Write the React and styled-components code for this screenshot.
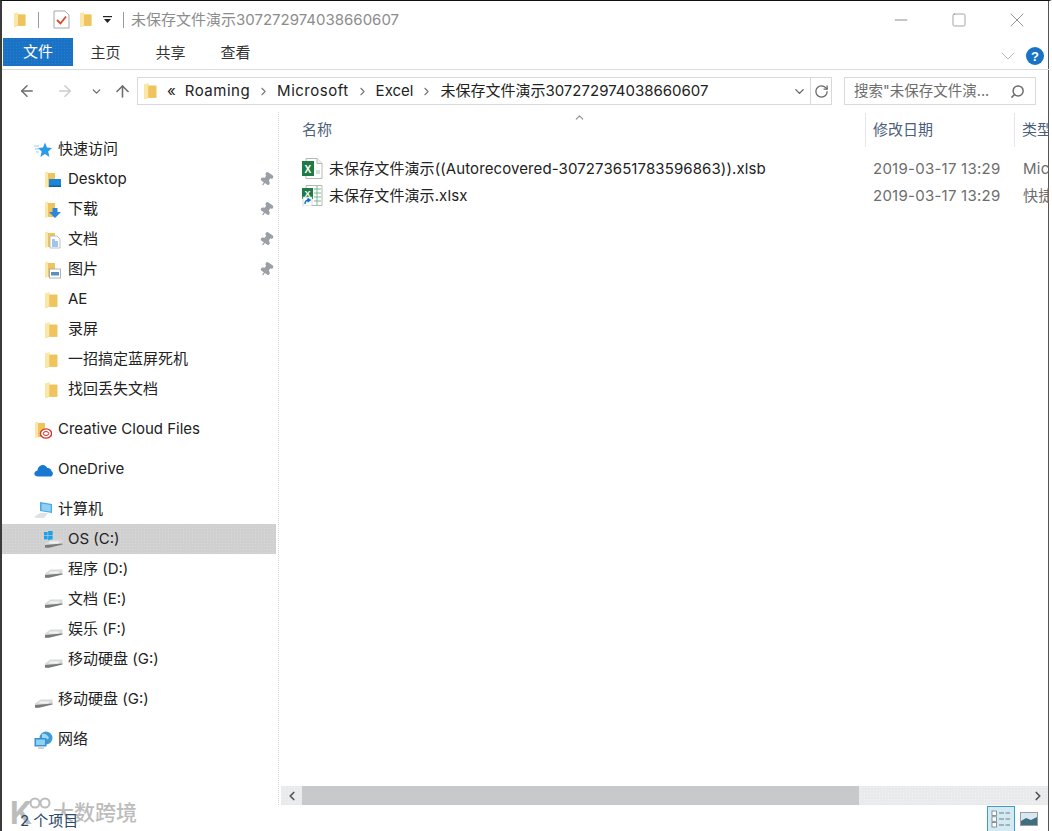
import React from 'react'
import styled, { createGlobalStyle } from 'styled-components'
import { ArrowLeft, ArrowRight, ArrowUp, ChevronDown, ChevronUp, ChevronLeft, ChevronRight, RotateCw, Search, X, Minus, Square, Pin } from 'lucide-react'

const FONT = 'Inter, "Noto Sans CJK SC", sans-serif'

const GlobalStyle = createGlobalStyle`
  html, body { margin: 0; padding: 0; background: #fff; }
  * { box-sizing: border-box; }
`

const Win = styled.div`
  position: relative;
  width: 1052px;
  height: 831px;
  display: flex;
  flex-direction: column;
  background: #fff;
  border-top: 1px solid #111;
  border-left: 2px solid #3a3a3a;
  border-right: 3px solid #fff;
  box-shadow: inset -1px 0 0 #555;
  font-family: ${FONT};
  font-size: 15px;
  line-height: 20px;
  overflow: hidden;
`

const TitleBar = styled.div`
  height: 37px;
  display: flex;
  align-items: center;
  padding-left: 11px;
  flex-shrink: 0;
`

const QuickIcon = styled.span`
  display: flex;
  align-items: center;
  margin-right: ${({ $gap }) => $gap || 0}px;
`

const Sep = styled.span`
  width: 1px;
  height: 16px;
  background: #9a9a9a;
  margin-right: ${({ $gap }) => $gap || 0}px;
`

const TitleText = styled.span`
  color: #8c8c8c;
  flex: 1;
`

const WinButtons = styled.div`
  display: flex;
  align-items: center;
  color: #777;
  padding-right: 3px;
`

const WinButton = styled.span`
  width: 58px;
  display: flex;
  justify-content: center;
`

const Ribbon = styled.div`
  height: 32px;
  display: flex;
  align-items: flex-start;
  border-bottom: 1px solid #dadbdc;
  flex-shrink: 0;
  padding-left: 1px;
`

const FileTab = styled.div`
  width: 70px;
  height: 28px;
  background-color: #1a72c4;
  background-image: radial-gradient(#2a80cf 0.6px, transparent 0.7px);
  background-size: 3px 3px;
  color: #fff;
  display: flex;
  align-items: center;
  justify-content: center;
`

const RibbonTab = styled.div`
  width: 65px;
  height: 30px;
  color: #333;
  display: flex;
  align-items: center;
  justify-content: center;
`

const RibbonEnd = styled.div`
  margin-left: auto;
  display: flex;
  align-items: center;
  gap: 6px;
  padding: 6px 5px 0 0;
  color: #a9a9a9;
`

const Help = styled.span`
  width: 18px;
  height: 18px;
  border-radius: 50%;
  background: #1a72c4;
  color: #fff;
  font: 700 13px "Liberation Sans", sans-serif;
  display: flex;
  align-items: center;
  justify-content: center;
`

const NavBar = styled.div`
  height: 42px;
  display: flex;
  align-items: center;
  padding: 0 12px 0 16px;
  flex-shrink: 0;
`

const NavButton = styled.span`
  display: flex;
  width: ${({ $w }) => $w}px;
  color: ${({ $off }) => ($off ? '#ccc' : '#6d6d6d')};
`

const AddressBox = styled.div`
  width: 695px;
  height: 28px;
  border: 1px solid #d9d9d9;
  display: flex;
  align-items: center;
  padding-left: 5px;
  color: #222;
  margin-left: 1px;
`

const Crumb = styled.span`
  margin-left: ${({ $left }) => $left || 0}px;
  letter-spacing: ${({ $wide }) => ($wide ? '0.5px' : '0')};
  white-space: nowrap;
`

const CrumbArrow = styled.span`
  display: flex;
  color: #777;
  margin: 0 7px;
`

const AddressEnd = styled.span`
  margin-left: auto;
  display: flex;
  align-items: center;
  height: 100%;
  color: #666;
`

const RefreshCell = styled.span`
  width: 21px;
  height: 100%;
  border-left: 1px solid #d9d9d9;
  margin-left: 3px;
  display: flex;
  align-items: center;
  justify-content: center;
`

const SearchBox = styled.div`
  width: 192px;
  height: 28px;
  margin-left: 12px;
  border: 1px solid #d9d9d9;
  display: flex;
  align-items: center;
  justify-content: space-between;
  padding: 0 10px 0 9px;
  font-size: 14.5px;
  color: #6d6d6d;
  white-space: nowrap;
`

const Body = styled.div`
  flex: 1;
  display: flex;
  min-height: 0;
`

const Sidebar = styled.nav`
  width: 277px;
  flex-shrink: 0;
  padding-top: 22px;
  border-right: 1px dotted #d6d6d6;
  margin-bottom: 26px;
`

const TreeRow = styled.div`
  width: 274px;
  height: 30px;
  display: flex;
  align-items: center;
  padding-left: ${({ $sub }) => ($sub ? 42 : 32)}px;
  margin-top: ${({ $top }) => $top || 0}px;
  background-color: ${({ $active }) => ($active ? '#d0d0d0' : 'transparent')};
  background-image: ${({ $active }) => ($active ? 'radial-gradient(#dadada 0.6px, transparent 0.7px)' : 'none')};
  background-size: 3px 3px;
  color: #222;
`

const TreeIcon = styled.span`
  width: 24px;
  margin-top: 2px;
  display: flex;
  flex-shrink: 0;
`

const PinMark = styled.span`
  margin-left: auto;
  margin-right: 2px;
  display: flex;
  color: #9aa0a6;
`

const Main = styled.main`
  flex: 1;
  min-width: 0;
  display: flex;
  flex-direction: column;
  position: relative;
`

const HeaderRow = styled.div`
  height: 34px;
  margin-top: 1px;
  display: flex;
  align-items: center;
  color: #4c607a;
  white-space: nowrap;
  overflow: hidden;
`

const HeadCell = styled.div`
  width: ${({ $w }) => $w}px;
  height: 100%;
  flex-shrink: 0;
  display: flex;
  align-items: center;
  padding-left: ${({ $pad }) => $pad}px;
  padding-bottom: 1px;
  border-right: ${({ $line }) => ($line ? '1px solid #e4e6e8' : 'none')};
`

const SortArrow = styled.span`
  position: absolute;
  top: -1px;
  left: 294px;
  display: flex;
  color: #8b8b8b;
`

const FileList = styled.div`
  padding-top: 8px;
  flex: 1;
`

const FileRow = styled.div`
  height: 27px;
  display: flex;
  align-items: center;
  color: #222;
  white-space: nowrap;
  overflow: hidden;
`

const FileName = styled.div`
  width: 588px;
  flex-shrink: 0;
  display: flex;
  align-items: center;
  padding-left: 23px;
  letter-spacing: 0.1px;
`

const FileIconBox = styled.span`
  width: 27px;
  display: flex;
  flex-shrink: 0;
`

const FileMeta = styled.div`
  width: ${({ $w }) => $w}px;
  flex-shrink: 0;
  color: #6d6d6d;
  padding-left: 6px;
  letter-spacing: 0.25px;
`

const HScroll = styled.div`
  height: 19px;
  margin: 0 1px 0 2px;
  display: flex;
  align-items: stretch;
  background-color: #e8eaeb;
  background-image: radial-gradient(#f3f4f5 0.6px, transparent 0.7px);
  background-size: 3px 3px;
  flex-shrink: 0;
`

const ScrollEnd = styled.span`
  width: 21px;
  display: flex;
  align-items: center;
  justify-content: center;
  color: #555;
  margin-left: ${({ $right }) => ($right ? 'auto' : 0)};
`

const ScrollThumb = styled.span`
  width: 557px;
  background: #c8c9ca;
`

const StatusBar = styled.div`
  height: 26px;
  display: flex;
  align-items: flex-end;
  justify-content: flex-end;
  flex-shrink: 0;
  padding-right: 6px;
`

const ViewButton = styled.span`
  width: 28px;
  height: 25px;
  display: flex;
  align-items: center;
  justify-content: center;
  background: ${({ $on }) => ($on ? '#d4eaf3' : 'transparent')};
  border: 1px solid ${({ $on }) => ($on ? '#3f9cc4' : 'transparent')};
  border-bottom: none;
`

const StatusText = styled.span`
  position: absolute;
  left: 18px;
  bottom: 0;
  line-height: 20px;
  color: #2c4a6a;
`

const Watermark = styled.div`
  position: absolute;
  left: 8px;
  bottom: 5px;
  display: flex;
  align-items: center;
  color: #bcbcbc;
  text-shadow: 0 0 2px #fff, 0 0 2px #fff;
  font-size: 21px;
  font-weight: 500;
  line-height: 26px;
  pointer-events: none;
`

const LogoK = styled.span`
  font-size: 31px;
  font-weight: 700;
  width: 21px;
`

const LogoRings = styled.svg`
  align-self: flex-start;
  margin: -4px 1px 0 -3px;
`

const Folder = ({ size = 15 }) => (
  <svg width={size} height={size * 1.13} viewBox="0 0 14 16">
    <path d="M1 1.5 L5 0.5 V2.5 H12.5 V14 H5 L1 15.5 Z" fill="#f6d77f" />
    <path d="M1 1.5 L5 0.5 V13 L1 15.5 Z" fill="#fbe7a8" />
    <path d="M5 2.5 H12.5 V14 H5 Z" fill="#efc45e" />
  </svg>
)

// folder with a small overlay (desktop, downloads...)
const FolderWith = ({ children }) => (
  <svg width="18" height="18" viewBox="0 0 18 18">
    <path d="M1 1.5 L4 .5 V2 H11 V16 H4 L1 17 Z" fill="#fbe7a8" />
    <path d="M4 2 H11 V16 H4 Z" fill="#efc45e" />
    {children}
  </svg>
)

const DesktopIcon = () => (
  <FolderWith>
    <rect x="5" y="8" width="12" height="8" fill="#1b86d6" />
    <rect x="5" y="14.5" width="12" height="1.5" fill="#0f5f9e" />
  </FolderWith>
)

const DownloadIcon = () => (
  <FolderWith>
    <path d="M8.5 7 H13.5 V11 H17 L11 17 L5 11 H8.5 Z" fill="#2f86d8" />
  </FolderWith>
)

const DocIcon = () => (
  <FolderWith>
    <path d="M6 5 H13 L16 8 V17 H6 Z" fill="#fff" stroke="#a9b4bd" strokeWidth=".8" />
    <path d="M8 9 H11 M8 11 H14 M8 13 H14 M8 15 H14" stroke="#3d8fd4" strokeWidth="1" />
  </FolderWith>
)

const PicIcon = () => (
  <FolderWith>
    <rect x="5.5" y="8" width="11" height="9" fill="#fff" stroke="#9aa3ab" strokeWidth=".8" />
    <rect x="7" y="11" width="8" height="3.5" fill="#5d8fb8" />
  </FolderWith>
)

const StarIcon = () => (
  <svg width="18" height="16" viewBox="0 0 18 16">
    <path d="M11 .5 L13 5.5 L18 6 L14.2 9.5 L15.4 15 L11 12 L6.4 15 L7.7 9.5 L4 6 L9 5.5 Z" fill="#2b9be8" />
    <path d="M0 4 H5 M1 7 H5 M2 10 H5" stroke="#8fcdf3" strokeWidth="1" />
  </svg>
)

const CloudFolderIcon = () => (
  <svg width="18" height="18" viewBox="0 0 18 18">
    <path d="M1 1.5 L4 .5 V2 H11 V16 H4 L1 17 Z" fill="#fbe7a8" />
    <path d="M4 2 H11 V16 H4 Z" fill="#efc45e" />
    <ellipse cx="12" cy="12.5" rx="5.6" ry="4.6" fill="#fff" stroke="#d8342a" strokeWidth="1.4" />
    <ellipse cx="12" cy="12.5" rx="2.7" ry="2" fill="none" stroke="#d8342a" strokeWidth="1" />
  </svg>
)

const OneDriveIcon = () => (
  <svg width="19" height="13" viewBox="0 0 19 13">
    <path d="M4 12.5 C1 12.5 0 10.5 .5 8.8 C1 7.2 2.4 6.6 3.4 6.7 C3.8 3.2 6.2 1 8.8 1 C11 1 12.6 2.4 13.2 4 C15.8 3.8 17.4 5.4 17.6 7.2 C18.8 7.8 19 9.2 18.8 10.2 C18.5 11.8 17.4 12.5 16 12.5 Z" fill="#1a78d0" />
  </svg>
)

const ComputerIcon = () => (
  <svg width="20" height="18" viewBox="0 0 20 18">
    <path d="M6 1 L18 3 V12 L6 10 Z" fill="#4aa6e4" />
    <path d="M7.5 2.5 L16.8 4 V10.8 L7.5 9.2 Z" fill="#8fd0f5" />
    <path d="M0 16 L6 12 H14 L10 17 H2 Z" fill="#dfe2e5" />
  </svg>
)

const Drive = ({ win }) => (
  <svg width="19" height="18" viewBox="0 0 19 18">
    {win && (
      <g fill="#19a0e6">
        <rect x="0" y="1" width="3.6" height="3.4" />
        <rect x="4.2" y="0" width="4.4" height="4.4" />
        <rect x="0" y="5" width="3.6" height="3.4" />
        <rect x="4.2" y="5" width="4.4" height="4.4" />
      </g>
    )}
    <path d="M1 12.5 L6.5 8.5 H18.5 V13 L5 16.5 H1 Z" fill="#d9dadb" />
    <path d="M6 10.5 H15.5 L14 12.5 H4.5 Z" fill="#f4f4f4" />
    <path d="M1 14 L18.5 12.5 V13.6 L5 16.8 H1 Z" fill="#77797b" />
  </svg>
)

const NetworkIcon = () => (
  <svg width="19" height="19" viewBox="0 0 19 19">
    <circle cx="12" cy="7" r="6.5" fill="#3f9bd4" />
    <path d="M8 3 C11 2 14 4 15 7 C13 9 10 9 8 7 Z" fill="#9fd8f6" />
    <rect x="0.5" y="7" width="12" height="8.5" fill="#3e8fd0" />
    <rect x="2" y="8.5" width="9" height="5.5" fill="#8fd0f5" />
    <rect x="4" y="15.5" width="6" height="2.5" fill="#c9d4db" />
  </svg>
)

const ChecklistIcon = () => (
  <svg width="17" height="19" viewBox="0 0 17 19">
    <path d="M1 1 H12 L16 5 V18 H1 Z" fill="#fff" stroke="#a7a7a7" />
    <path d="M4 10 L7.5 13.5 L13 6.5" fill="none" stroke="#d9482b" strokeWidth="1.8" />
  </svg>
)

const QuickDropdown = () => (
  <svg width="9" height="9" viewBox="0 0 9 9">
    <rect x="0" y="1" width="9" height="1.2" fill="#222" />
    <path d="M1 4 H8 L4.5 8 Z" fill="#222" />
  </svg>
)

const XlsbIcon = () => (
  <svg width="22" height="21" viewBox="0 0 22 21">
    <path d="M4 .5 H15 L20 5.5 V20.5 H4 Z" fill="#fff" stroke="#b4b8b4" />
    <path d="M15 .5 V5.5 H20" fill="#eef0ee" stroke="#b4b8b4" />
    <rect x="14" y="12" width="4" height="4" fill="#cfe4d6" />
    <rect x="0" y="3" width="12" height="15" fill="#1f7a45" />
    <text x="6" y="14.5" fontSize="10" fontWeight="700" fontFamily="Liberation Sans" fill="#fff" textAnchor="middle">X</text>
  </svg>
)

const XlsxLinkIcon = () => (
  <svg width="22" height="21" viewBox="0 0 22 21">
    <path d="M4 .5 H20 V20.5 H4 Z" fill="#fff" stroke="#b4b8b4" />
    <path d="M12 4 H19 M12 8 H19 M12 12 H19 M12 16 H19 M15 1 V20" stroke="#7fb796" strokeWidth="1" />
    <rect x="0" y="3" width="11" height="11" fill="#1f7a45" />
    <text x="5.5" y="12" fontSize="9" fontWeight="700" fontFamily="Liberation Sans" fill="#fff" textAnchor="middle">X</text>
    <rect x="1" y="12" width="9" height="9" fill="#fff" stroke="#b8c2cc" strokeWidth=".6" />
    <path d="M3 19 C3 16 4.5 15 7 15 M5.5 13.5 L8 15 L5.5 17" fill="none" stroke="#1a6fc4" strokeWidth="1.5" />
  </svg>
)

const DetailsViewIcon = () => (
  <svg width="20" height="18" viewBox="0 0 20 18">
    <g fill="#fff" stroke="#6e7d85" strokeWidth=".8">
      <rect x="1" y="1" width="4.5" height="4.5" />
      <rect x="1" y="6.8" width="4.5" height="4.5" />
      <rect x="1" y="12.5" width="4.5" height="4.5" />
    </g>
    <path d="M8 3 H13 M14.5 3 H19 M8 9 H13 M14.5 9 H19 M8 15 H13 M14.5 15 H19" stroke="#6e7d85" strokeWidth="1" />
  </svg>
)

const PreviewViewIcon = () => (
  <svg width="18" height="14" viewBox="0 0 18 14">
    <rect x=".5" y=".5" width="17" height="13" fill="#d7e8f2" stroke="#9c9c9c" />
    <path d="M1 9 L6 6 L11 8 L17 5 V13 H1 Z" fill="#3d6f80" />
  </svg>
)

const quickAccess = [
  { label: 'Desktop', icon: <DesktopIcon />, pin: true },
  { label: '下载', icon: <DownloadIcon />, pin: true },
  { label: '文档', icon: <DocIcon />, pin: true },
  { label: '图片', icon: <PicIcon />, pin: true },
  { label: 'AE', icon: <Folder /> },
  { label: '录屏', icon: <Folder /> },
  { label: '一招搞定蓝屏死机', icon: <Folder /> },
  { label: '找回丢失文档', icon: <Folder /> },
]

const drives = [
  { label: 'OS (C:)', icon: <Drive win />, active: true },
  { label: '程序 (D:)', icon: <Drive /> },
  { label: '文档 (E:)', icon: <Drive /> },
  { label: '娱乐 (F:)', icon: <Drive /> },
  { label: '移动硬盘 (G:)', icon: <Drive /> },
]

export default function App() {
  return (
    <>
      <GlobalStyle />
      <Win>
        <TitleBar>
          <QuickIcon $gap={11}><Folder size={14} /></QuickIcon>
          <Sep $gap={14} />
          <QuickIcon $gap={9}><ChecklistIcon /></QuickIcon>
          <QuickIcon $gap={10}><Folder size={14} /></QuickIcon>
          <QuickIcon $gap={11}><QuickDropdown /></QuickIcon>
          <Sep $gap={7} />
          <TitleText>未保存文件演示307272974038660607</TitleText>
          <WinButtons>
            <WinButton><Minus size={20} strokeWidth={1} /></WinButton>
            <WinButton><Square size={16} strokeWidth={1} /></WinButton>
            <WinButton><X size={24} strokeWidth={0.8} /></WinButton>
          </WinButtons>
        </TitleBar>

        <Ribbon>
          <FileTab>文件</FileTab>
          <RibbonTab>主页</RibbonTab>
          <RibbonTab>共享</RibbonTab>
          <RibbonTab>查看</RibbonTab>
          <RibbonEnd>
            <ChevronDown size={24} strokeWidth={0.8} />
            <Help>?</Help>
          </RibbonEnd>
        </Ribbon>

        <NavBar>
          <NavButton $w={38}><ArrowLeft size={18} /></NavButton>
          <NavButton $w={34} $off><ArrowRight size={18} /></NavButton>
          <NavButton $w={23}><ChevronDown size={13} strokeWidth={2.5} /></NavButton>
          <NavButton $w={23}><ArrowUp size={19} /></NavButton>
          <AddressBox>
            <Folder size={15} />
            <Crumb $left={9}>«</Crumb>
            <Crumb $left={9} $wide>Roaming</Crumb>
            <CrumbArrow><ChevronRight size={13} /></CrumbArrow>
            <Crumb $wide>Microsoft</Crumb>
            <CrumbArrow><ChevronRight size={13} /></CrumbArrow>
            <Crumb>Excel</Crumb>
            <CrumbArrow><ChevronRight size={13} /></CrumbArrow>
            <Crumb>未保存文件演示307272974038660607</Crumb>
            <AddressEnd>
              <ChevronDown size={15} strokeWidth={2.2} />
              <RefreshCell><RotateCw size={15} /></RefreshCell>
            </AddressEnd>
          </AddressBox>
          <SearchBox>
            搜索"未保存文件演...
            <Search size={15} strokeWidth={2.4} style={{ transform: 'scaleX(-1)' }} />
          </SearchBox>
        </NavBar>

        <Body>
          <Sidebar>
            <TreeRow><TreeIcon><StarIcon /></TreeIcon>快速访问</TreeRow>
            {quickAccess.map((item) => (
              <TreeRow $sub key={item.label}>
                <TreeIcon>{item.icon}</TreeIcon>
                {item.label}
                {item.pin && <PinMark><Pin size={15} fill="currentColor" style={{ transform: 'rotate(35deg)' }} /></PinMark>}
              </TreeRow>
            ))}
            <TreeRow $top={10}><TreeIcon><CloudFolderIcon /></TreeIcon>Creative Cloud Files</TreeRow>
            <TreeRow $top={10}><TreeIcon><OneDriveIcon /></TreeIcon>OneDrive</TreeRow>
            <TreeRow $top={10}><TreeIcon><ComputerIcon /></TreeIcon>计算机</TreeRow>
            {drives.map((item) => (
              <TreeRow $sub $active={item.active} key={item.label}>
                <TreeIcon>{item.icon}</TreeIcon>
                {item.label}
              </TreeRow>
            ))}
            <TreeRow $top={10}><TreeIcon><Drive /></TreeIcon>移动硬盘 (G:)</TreeRow>
            <TreeRow $top={10}><TreeIcon><NetworkIcon /></TreeIcon>网络</TreeRow>
          </Sidebar>

          <Main>
            <SortArrow><ChevronUp size={13} /></SortArrow>
            <HeaderRow>
              <HeadCell $w={587} $pad={23} $line>名称</HeadCell>
              <HeadCell $w={149} $pad={7} $line>修改日期</HeadCell>
              <HeadCell $w={40} $pad={7}>类型</HeadCell>
            </HeaderRow>
            <FileList>
              <FileRow>
                <FileName><FileIconBox><XlsbIcon /></FileIconBox>未保存文件演示((Autorecovered-307273651783596863)).xlsb</FileName>
                <FileMeta $w={150}>2019-03-17 13:29</FileMeta>
                <FileMeta $w={40}>Mic</FileMeta>
              </FileRow>
              <FileRow>
                <FileName><FileIconBox><XlsxLinkIcon /></FileIconBox>未保存文件演示.xlsx</FileName>
                <FileMeta $w={150}>2019-03-17 13:29</FileMeta>
                <FileMeta $w={40}>快捷</FileMeta>
              </FileRow>
            </FileList>
            <HScroll>
              <ScrollEnd><ChevronLeft size={14} strokeWidth={3} /></ScrollEnd>
              <ScrollThumb />
              <ScrollEnd $right><ChevronRight size={14} strokeWidth={3} /></ScrollEnd>
            </HScroll>
            <StatusBar>
              <ViewButton $on><DetailsViewIcon /></ViewButton>
              <ViewButton><PreviewViewIcon /></ViewButton>
            </StatusBar>
          </Main>
        </Body>

        <Watermark>
          <LogoK>K</LogoK>
          <LogoRings width="24" height="14" viewBox="0 0 24 14">
            <circle cx="7" cy="7" r="4.5" fill="none" stroke="#bcbcbc" strokeWidth="2" />
            <circle cx="17" cy="7" r="4.5" fill="none" stroke="#bcbcbc" strokeWidth="2" />
          </LogoRings>
          <span>大数跨境</span>
        </Watermark>
        <StatusText>2 个项目</StatusText>
      </Win>
    </>
  )
}
